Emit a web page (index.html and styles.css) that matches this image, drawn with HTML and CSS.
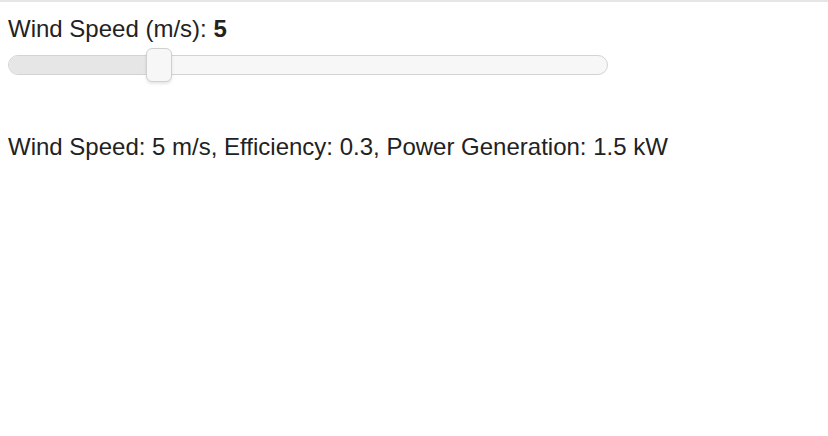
FILE: index.html
```html
<!DOCTYPE html>
<html>
<head>
<meta charset="utf-8">
<link rel="stylesheet" href="styles.css">
</head>
<body>
<div class="page">
  <div class="label">Wind Speed (m/s): <b>5</b></div>
  <div class="slider">
    <div class="fill" style="width: 25%"></div>
    <div class="thumb" style="left: calc(25% - 13px)"></div>
  </div>
  <p class="result">Wind Speed: 5 m/s, Efficiency: 0.3, Power Generation: 1.5 kW</p>
</div>
</body>
</html>
```
FILE: styles.css
```css
html, body {
  margin: 0;
  padding: 0;
  background: #fff;
}
.page {
  border-top: 2px solid #e6e6e6;
  padding: 13px 8px 0 8px;
  font-family: "Liberation Sans", Arial, sans-serif;
  font-size: 24px;
  color: #222;
}
.label {
  line-height: 28px;
}
.label b {
  font-weight: bold;
}
.slider {
  position: relative;
  width: 598px;
  height: 18px;
  margin-top: 12px;
  border: 1px solid #d3d3d3;
  border-radius: 10px;
  background: #f7f7f7;
}
.fill {
  height: 100%;
  background: #e6e6e6;
  border-radius: 9px 0 0 9px;
}
.thumb {
  position: absolute;
  top: -8px;
  width: 24px;
  height: 32px;
  background: #f7f7f7;
  border: 1px solid #d0d0d0;
  border-radius: 6px;
  box-shadow: 0 2px 3px rgba(0,0,0,0.1);
}
.result {
  margin: 58px 0 0 0;
  line-height: 28px;
}
```
